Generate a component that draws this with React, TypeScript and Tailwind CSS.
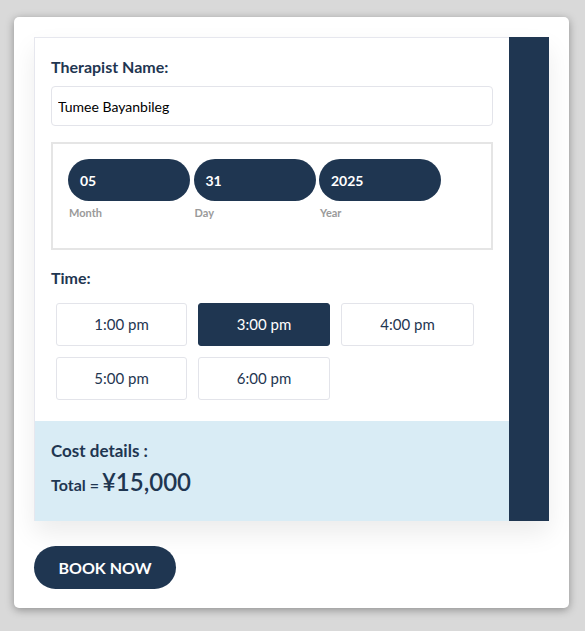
import React, { useState } from 'react';

const times = ['1:00 pm', '3:00 pm', '4:00 pm', '5:00 pm', '6:00 pm'];

const dateParts = [
    { value: '05', label: 'Month' },
    { value: '31', label: 'Day' },
    { value: '2025', label: 'Year' },
];

const App: React.FC = () => {
    const [selected, setSelected] = useState('3:00 pm');

    return (
        <div className="min-h-screen bg-[#d9d9d9] pt-[17px] px-[14px] font-['Lato','Liberation_Sans',sans-serif]">
            <div className="w-[555px] bg-white rounded-[5px] shadow-[0_2px_8px_rgba(0,0,0,0.35)] p-5 pb-[19px]">
                <div className="flex shadow-[0_12px_24px_rgba(0,0,0,0.08)]">
                    <div className="w-[475px] border-l border-t border-[#e6e7ee] bg-white">
                        <div className="px-4 pt-5 pb-[21px]">
                            <h2 className="text-[16px] font-bold text-[#1f3651] leading-[18px]">Therapist Name:</h2>
                            <input
                                type="text"
                                defaultValue="Tumee Bayanbileg"
                                className="mt-[10px] w-full h-[40px] border border-[#e3e4ea] rounded-[4px] px-[6px] text-[14px] text-black outline-none"
                            />
                            <div className="mt-[16px] border-2 border-[#e5e5e5] pt-[15px] pb-[28px] px-[15px]">
                                <div className="flex gap-[3.5px]">
                                    {dateParts.map((p) => (
                                        <div key={p.label} className="w-[122px]">
                                            <div className="h-[42px] rounded-full bg-[#1f3651] text-white text-[14px] font-bold flex items-center px-3">
                                                {p.value}
                                            </div>
                                            <div className="mt-[5px] pl-[1px] text-[11px] font-bold text-[#9a9a9a] leading-[14px]">{p.label}</div>
                                        </div>
                                    ))}
                                </div>
                            </div>
                            <h2 className="mt-[19px] text-[16px] font-bold text-[#1f3651] leading-[18px]">Time:</h2>
                            <div className="mt-[16px] ml-[5px] grid grid-cols-[131px_132px_133px] gap-x-[11px] gap-y-[11px]">
                                {times.map((t) => (
                                    <button
                                        key={t}
                                        onClick={() => setSelected(t)}
                                        className={`h-[43px] rounded-[3px] border text-[15px] ${selected === t ? 'bg-[#1f3651] border-[#1f3651] text-white' : 'bg-white border-[#e3e4ea] text-[#1f3651]'}`}
                                    >
                                        {t}
                                    </button>
                                ))}
                            </div>
                        </div>
                        <div className="bg-[#d9ecf5] h-[100px] px-4 pt-[20px]">
                            <div className="text-[17px] font-bold text-[#1f3651] leading-[20px]">Cost details :</div>
                            <div className="mt-[3px] flex items-baseline text-[#1f3651]">
                                <span className="text-[16px] font-bold">Total =</span>
                                <span className="ml-[3px] text-[24px] font-semibold">¥15,000</span>
                            </div>
                        </div>
                    </div>
                    <div className="w-[40px] bg-[#1f3651]" />
                </div>
                <button className="mt-[25px] h-[43px] w-[142px] rounded-full bg-[#1f3651] text-white text-[16px] font-bold uppercase">
                    Book Now
                </button>
            </div>
        </div>
    );
};

export default App;
